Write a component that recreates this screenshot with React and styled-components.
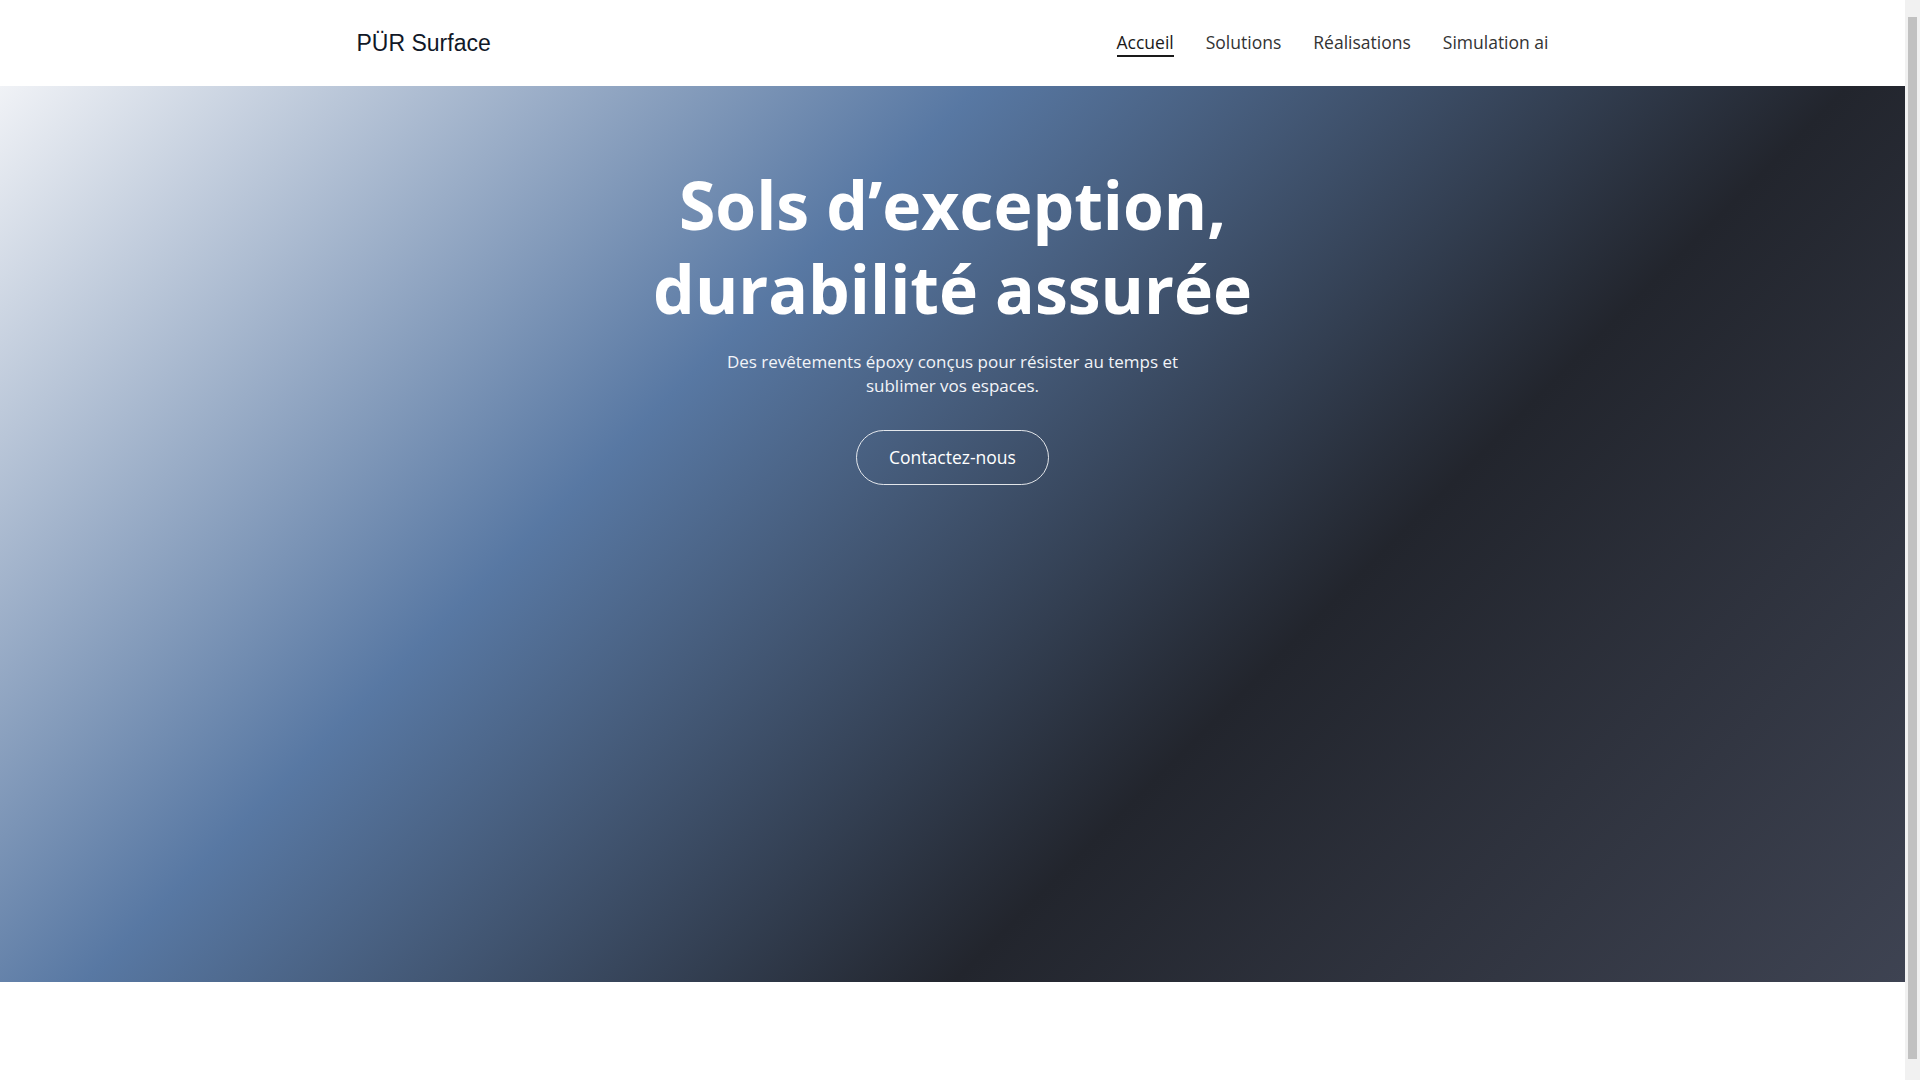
import React from "react";
import styled, { createGlobalStyle } from "styled-components";

const GlobalStyle = createGlobalStyle`
  * { box-sizing: border-box; }
  html {
    margin: 0;
    padding: 0;
    background-color: #f1f1f1;
    background-image: linear-gradient(#c1c1c1, #c1c1c1);
    background-repeat: no-repeat;
    background-size: 9px 1042px;
    background-position: right 3px top 17px;
  }
  body {
    margin: 0 15px 0 0;
    padding: 0;
    font-family: "Open Sans", "Liberation Sans", sans-serif;
    background: #ffffff;
    color: #222;
  }
`;

const Header = styled.header`
  background: #ffffff;
  height: 86px;
`;

const HeaderInner = styled.div`
  max-width: 1192px;
  height: 100%;
  margin: 0 auto;
  display: flex;
  align-items: center;
  justify-content: space-between;
`;

const Logo = styled.a`
  font-family: "Liberation Sans", Arial, sans-serif;
  font-size: 23px;
  color: #111827;
  text-decoration: none;
  line-height: 1;
`;

const Nav = styled.nav`
  display: flex;
  align-items: center;
  gap: 32px;
`;

const NavLink = styled.a`
  font-size: 17.5px;
  line-height: 24px;
  color: ${(p) => (p.$active ? "#1a1a1a" : "#333333")};
  text-decoration: none;
  padding-top: 1px;
  padding-bottom: 1px;
  border-bottom: 2px solid ${(p) => (p.$active ? "#1a1a1a" : "transparent")};
`;

const Hero = styled.section`
  height: 896px;
  padding-top: 76px;
  display: flex;
  flex-direction: column;
  align-items: center;
  text-align: center;
  background: linear-gradient(
    135deg,
    #f0f2f6 0%,
    #5878a3 35%,
    #22252d 66%,
    #3e4352 100%
  );
`;

const Title = styled.h1`
  margin: 0;
  max-width: 700px;
  font-size: 66px;
  font-weight: 700;
  line-height: 84px;
  color: #ffffff;
`;

const Subtitle = styled.p`
  margin: 20px 0 0;
  max-width: 480px;
  font-size: 17px;
  line-height: 24px;
  color: #f2f4f8;
`;

const CTA = styled.a`
  margin-top: 32px;
  display: inline-block;
  padding: 16px 32px;
  border: 1px solid rgba(255, 255, 255, 0.85);
  border-radius: 999px;
  font-size: 17.5px;
  line-height: 21px;
  color: #ffffff;
  text-decoration: none;
`;

const NextSection = styled.section`
  height: 120px;
  background: #ffffff;
`;

export default function App() {
  return (
    <>
      <GlobalStyle />
      <Header>
        <HeaderInner>
          <Logo href="#">PÜR Surface</Logo>
          <Nav>
            <NavLink href="#" $active>Accueil</NavLink>
            <NavLink href="#">Solutions</NavLink>
            <NavLink href="#">Réalisations</NavLink>
            <NavLink href="#">Simulation ai</NavLink>
          </Nav>
        </HeaderInner>
      </Header>
      <Hero>
        <Title>Sols d’exception, durabilité assurée</Title>
        <Subtitle>
          Des revêtements époxy conçus pour résister au temps et sublimer vos
          espaces.
        </Subtitle>
        <CTA href="#">Contactez-nous</CTA>
      </Hero>
      <NextSection />
    </>
  );
}
